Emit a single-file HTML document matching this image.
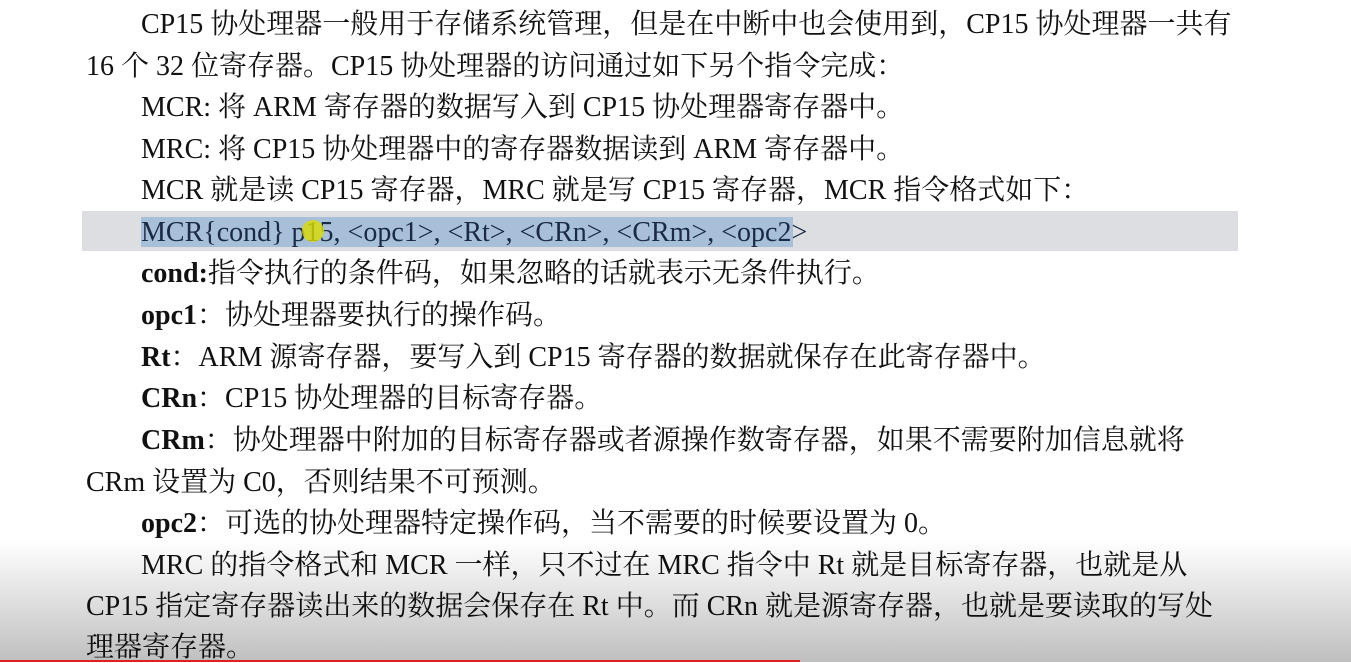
<!DOCTYPE html>
<html><head><meta charset="utf-8"><style>
html,body{margin:0;padding:0;}
body{width:1351px;height:662px;overflow:hidden;position:relative;background:#fff;font-family:"Liberation Serif","Noto Serif CJK SC",serif;font-size:28px;color:#111;}
.l{position:absolute;white-space:nowrap;line-height:30px;height:30px;}
.i{left:141px}.f{left:86px}
b{font-weight:bold}
#hl{position:absolute;left:82px;top:211px;width:1156px;height:40px;background:#dcdee2;}
#sel{position:absolute;left:141px;top:217px;width:652px;height:30px;background:#a7bfd8;}
#cur{position:absolute;left:302px;top:220px;width:22px;height:22px;border-radius:50%;background:rgba(220,220,0,.8);}
#shade{position:absolute;left:0;top:540px;width:1351px;height:122px;background:linear-gradient(rgba(0,0,0,0),rgba(0,0,0,.25));}
#red{position:absolute;left:0;top:660px;width:800px;height:2px;background:#e02020;}
</style></head><body>
<div id="hl"></div><div id="sel"></div>
<div class="l i" style="top:10px">CP15 协处理器一般用于存储系统管理，但是在中断中也会使用到，CP15 协处理器一共有</div>
<div class="l f" style="top:52px">16 个 32 位寄存器。CP15 协处理器的访问通过如下另个指令完成：</div>
<div class="l i" style="top:93px">MCR: 将 ARM 寄存器的数据写入到 CP15 协处理器寄存器中。</div>
<div class="l i" style="top:135px">MRC: 将 CP15 协处理器中的寄存器数据读到 ARM 寄存器中。</div>
<div class="l i" style="top:176px">MCR 就是读 CP15 寄存器，MRC 就是写 CP15 寄存器，MCR 指令格式如下：</div>
<div class="l i" style="top:218px;color:#1a2a44">MCR{cond} p15, &lt;opc1&gt;, &lt;Rt&gt;, &lt;CRn&gt;, &lt;CRm&gt;, &lt;opc2&gt;</div>
<div id="cur"></div>
<div class="l i" style="top:259px"><b>cond:</b>指令执行的条件码，如果忽略的话就表示无条件执行。</div>
<div class="l i" style="top:301px"><b>opc1</b>：协处理器要执行的操作码。</div>
<div class="l i" style="top:343px"><b>Rt</b>：ARM 源寄存器，要写入到 CP15 寄存器的数据就保存在此寄存器中。</div>
<div class="l i" style="top:384px"><b>CRn</b>：CP15 协处理器的目标寄存器。</div>
<div class="l i" style="top:426px"><b>CRm</b>：协处理器中附加的目标寄存器或者源操作数寄存器，如果不需要附加信息就将</div>
<div class="l f" style="top:468px">CRm 设置为 C0，否则结果不可预测。</div>
<div class="l i" style="top:509px"><b>opc2</b>：可选的协处理器特定操作码，当不需要的时候要设置为 0。</div>
<div class="l i" style="top:551px">MRC 的指令格式和 MCR 一样，只不过在 MRC 指令中 Rt 就是目标寄存器，也就是从</div>
<div class="l f" style="top:592px">CP15 指定寄存器读出来的数据会保存在 Rt 中。而 CRn 就是源寄存器，也就是要读取的写处</div>
<div class="l f" style="top:633px">理器寄存器。</div>
<div id="shade"></div><div id="red"></div>
</body></html>
